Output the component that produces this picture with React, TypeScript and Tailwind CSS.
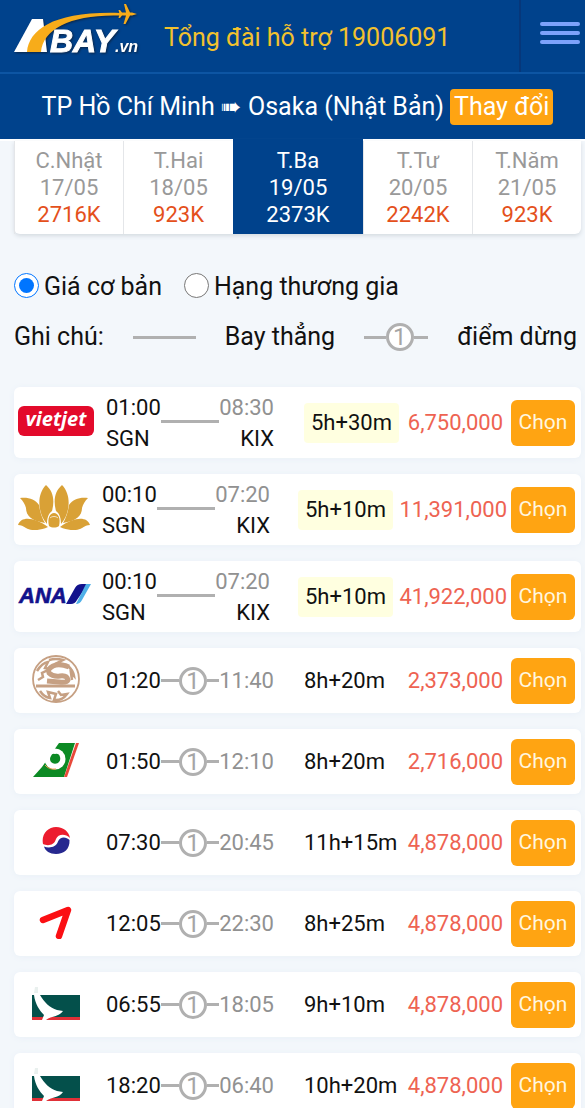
import { useState, ReactNode } from 'react'
import { clsx } from 'clsx'

interface DayFare {
  day: string
  date: string
  price: string
}

interface Flight {
  id: number
  airline: string
  logo: ReactNode
  depart: string
  arrive: string
  duration: string
  price: string
  direct?: boolean
}

function AbayLogo() {
  return (
    <svg
      width="126"
      height="62"
      viewBox="0 0 126 62"
      role="img"
      aria-label="Abay.vn"
      className="drop-shadow-[1px_1px_1px_#0a2547]"
    >
      <path d="M1 48 19 15h11l4 33z" fill="#fff" />
      <path d="M14 48C16 25 42 7 107 9v2.500C60 10 30 24 28 48z" fill="#f7ac1a" />
      <path
        d="m124 10-5-1.500h-2L113 0h-2l2 8.500h-4L107 6h-1.500l1 4-1 4h1.500l2-2.500h4L110.500 20h2L117 11.500h2z"
        fill="#f7ac1a"
      />
      <g fontFamily="Liberation Sans, Arial, sans-serif" fontWeight="bold" fontStyle="italic" fill="#fff">
        <text x="37" y="48" fontSize="32" stroke="#fff" strokeWidth="1">BAY</text>
        <text x="102" y="48" fontSize="16">.vn</text>
      </g>
    </svg>
  )
}

function VietjetLogo() {
  return (
    <svg width="76" height="30" viewBox="0 0 76 30">
      <rect width="76" height="30" rx="6" fill="#e30a2b" />
      <text
        x="38"
        y="20"
        textAnchor="middle"
        fontFamily="Open Sans, sans-serif"
        fontSize="20"
        fontWeight="700"
        fontStyle="italic"
        fill="#fff"
      >
        vietjet
      </text>
    </svg>
  )
}

function LotusLogo() {
  return (
    <svg width="72" height="45" viewBox="0 0 72 45" fill="#d9a136">
      <path d="M28 0c7 6 9 15 6 26-4 3-5 8-5 13C20 29 18 10 28 0z" />
      <path d="M44 0c-7 6-9 15-6 26 4 3 5 8 5 13C52 29 54 10 44 0z" />
      <path d="M2 13c8-1 15 1 19 7 1 7 3 13 6 18C14 36 8 31 8 23 7 19 5 16 2 13z" />
      <path d="M70 13c-8-1-15 1-19 7-1 7-3 13-6 18 13-2 19-7 19-15 1-4 3-7 6-10z" />
      <path d="M0 40C3 31 16 32 30 42c-9 4-17 4-22 1-3-2-5-3-8-3z" />
      <path d="M72 40c-3-9-16-8-30 2 9 4 17 4 22 1 3-2 5-3 8-3z" />
      <path d="M31 41c-2-8 1-13 5-13s7 5 5 13c-3 2-7 2-10 0z" />
      <path d="M32 33c2-2 6-2 8 0" stroke="#fff" strokeWidth=".7" fill="none" />
    </svg>
  )
}

function AnaLogo() {
  return (
    <svg width="74" height="30" viewBox="0 0 74 30">
      <text
        x="2"
        y="23"
        fontFamily="Liberation Sans, Arial, sans-serif"
        fontSize="22"
        fontWeight="bold"
        fontStyle="italic"
        fill="#12128c"
        stroke="#12128c"
        strokeWidth=".6"
      >
        ANA
      </text>
      <path d="M49 24 58 8q2-4 7-4h6L60 20q-2 4-6 4z" fill="#12128c" />
      <path d="M69 4h5l-9 16q-2 4-6 4z" fill="#4fb0e8" />
    </svg>
  )
}

function DragonLogo() {
  return (
    <svg width="48" height="48" viewBox="0 0 48 48" fill="none" stroke="#c6a083">
      <circle cx="24" cy="24" r="23" strokeWidth="1.800" />
      <path d="M5 16q5-8 11-9l-3 6 5 1-8 4 1 4-5 3" strokeWidth="2.500" />
      <path d="M17 5q7-2 14 0l-6 3 10 2q6 5 7 11l-3-3 1 7" strokeWidth="2.500" />
      <path d="M37 12q-10-4-16-1t-4 7q4 4 11 3t8 4q-1 3-9 2l-12-1" strokeWidth="5" />
      <path d="M4 31h39" strokeWidth="3" />
      <path d="M8 36q4 6 10 7l-2-6 8 2-2 6q8 1 13-6l-6 1-3-4" strokeWidth="2.500" />
    </svg>
  )
}

function EvaLogo() {
  return (
    <svg width="46" height="34" viewBox="0 0 46 34">
      <path d="M0 34 9 24 26 0h16L31 34z" fill="#0c8a24" />
      <path d="M43 0h3L34 34h-3z" fill="#e8493a" />
      <ellipse cx="22" cy="16" rx="10.500" ry="10.500" fill="#fff" />
      <path d="M10 20 20 5q-3 5-1 6z" fill="#fff" />
      <path d="M18 13q1-3 4-2 4-1 5 3 1 4-2 6-4 2-7-1-2-3 0-6z" fill="#0c8a24" />
      <path d="M12 22q4 5 11 4" stroke="#f2994a" strokeWidth="1" fill="none" />
    </svg>
  )
}

function KoreanAirLogo() {
  return (
    <svg width="28" height="28" viewBox="0 0 28 28">
      <circle cx="14" cy="14" r="13.500" fill="#fff" />
      <path d="M1 17C-1 7 6 0 14 0c8 0 13 5 14 11-5-5-12-4-14 1-2 7-9 7-13 5z" fill="#ec1c2e" />
      <path d="M27.500 13C28 22 22 27 14 27 8 27 3 24 2 19.500c5 2 12 1 14-5 2-5 8-5 11.500-1.500z" fill="#26288f" />
    </svg>
  )
}

function AsianaLogo() {
  return (
    <svg width="34" height="34" viewBox="0 0 34 34">
      <path d="M4 15 29 5 20 31" fill="none" stroke="#fb0f13" strokeWidth="6.500" strokeLinecap="round" strokeLinejoin="round" />
    </svg>
  )
}

function CathayLogo() {
  return (
    <svg width="48" height="34" viewBox="0 0 48 34">
      <path d="M0 9h48v22H0z" fill="#04504b" />
      <path d="M0 31h48v3H0z" fill="#e03037" />
      <path d="M2 0h5l1 9c4 7 10 13 17 15l6 1c-4 6-12 5-17 9h-4l2-5C8 25 3 18 2 9z" fill="#fff" />
      <path d="M3 1h3v6H2z" fill="#e9f0ee" />
    </svg>
  )
}

const days: DayFare[] = [
  { day: 'C.Nhật', date: '17/05', price: '2716K' },
  { day: 'T.Hai', date: '18/05', price: '923K' },
  { day: 'T.Ba', date: '19/05', price: '2373K' },
  { day: 'T.Tư', date: '20/05', price: '2242K' },
  { day: 'T.Năm', date: '21/05', price: '923K' },
]

const flights: Flight[] = [
  { id: 1, airline: 'Vietjet', logo: <VietjetLogo />, depart: '01:00', arrive: '08:30', duration: '5h+30m', price: '6,750,000', direct: true },
  { id: 2, airline: 'Vietnam Airlines', logo: <LotusLogo />, depart: '00:10', arrive: '07:20', duration: '5h+10m', price: '11,391,000', direct: true },
  { id: 3, airline: 'ANA', logo: <AnaLogo />, depart: '00:10', arrive: '07:20', duration: '5h+10m', price: '41,922,000', direct: true },
  { id: 4, airline: 'Dragonair', logo: <DragonLogo />, depart: '01:20', arrive: '11:40', duration: '8h+20m', price: '2,373,000' },
  { id: 5, airline: 'EVA Air', logo: <EvaLogo />, depart: '01:50', arrive: '12:10', duration: '8h+20m', price: '2,716,000' },
  { id: 6, airline: 'Korean Air', logo: <KoreanAirLogo />, depart: '07:30', arrive: '20:45', duration: '11h+15m', price: '4,878,000' },
  { id: 7, airline: 'Asiana Airlines', logo: <AsianaLogo />, depart: '12:05', arrive: '22:30', duration: '8h+25m', price: '4,878,000' },
  { id: 8, airline: 'Cathay Pacific', logo: <CathayLogo />, depart: '06:55', arrive: '18:05', duration: '9h+10m', price: '4,878,000' },
  { id: 9, airline: 'Cathay Pacific', logo: <CathayLogo />, depart: '18:20', arrive: '06:40', duration: '10h+20m', price: '4,878,000' },
]

function StopLine({ className }: { className?: string }) {
  return (
    <span className={clsx('flex items-center', className)}>
      <span className="h-[3px] flex-[3] bg-[#b0b0b0]" />
      <span className="flex size-7 shrink-0 items-center justify-center rounded-full border-[3px] border-[#b0b0b0] bg-white text-2xl leading-none text-[#a5a5a5]">
        1
      </span>
      <span className="h-[3px] flex-[2] bg-[#b0b0b0]" />
    </span>
  )
}

function FlightRow({ flight }: { flight: Flight }) {
  // Eight-digit fares need a wider price column
  const wide = flight.price.length > 9

  return (
    <li
      className={clsx(
        'flex items-center rounded-md bg-white pr-1.5 shadow-[0_1px_6px_#e9f0f7]',
        flight.direct ? 'h-[71px]' : 'h-[65px]'
      )}
    >
      <div className="flex flex-1 justify-center pb-1" role="img" aria-label={flight.airline}>
        {flight.logo}
      </div>

      {flight.direct ? (
        <div className="ml-2 flex w-[168px] leading-[31px]">
          <div>
            <div>{flight.depart}</div>
            <div>SGN</div>
          </div>
          <span className="mt-7 h-[3px] flex-1 bg-[#b0b0b0]" />
          <div className="text-right">
            <div className="text-[#919191]">{flight.arrive}</div>
            <div>KIX</div>
          </div>
        </div>
      ) : (
        <div className="ml-2 flex w-[168px] items-center">
          <span>{flight.depart}</span>
          <StopLine className="flex-1" />
          <span className="text-[#919191]">{flight.arrive}</span>
        </div>
      )}

      <div className={wide ? 'ml-7 w-[100px]' : 'ml-[30px] w-[103px]'}>
        <span className={clsx('inline-block leading-10', flight.direct && 'rounded-sm bg-[#ffffe0] px-[7px]')}>
          {flight.duration}
        </span>
      </div>

      <div className={clsx('text-right text-[#ee6352]', wide ? 'mr-1 w-[109px]' : 'mr-2 w-24')}>
        {flight.price}
      </div>

      <button type="button" className="h-[46px] w-16 rounded-md bg-[#ffa412] text-[21px] text-[#fff6df]">
        Chọn
      </button>
    </li>
  )
}

export default function App() {
  const [selected, setSelected] = useState(2)
  const [fareClass, setFareClass] = useState('basic')

  const fareOptions = [
    { value: 'basic', label: 'Giá cơ bản' },
    { value: 'business', label: 'Hạng thương gia' },
  ]

  return (
    <div className="min-h-screen overflow-hidden bg-[#f3f7fb] font-['Roboto',sans-serif] text-[22px] text-[#111]">
      <header className="flex h-[74px] border-b-2 border-[#0d55a3] bg-[#00428c]">
        <a href="#home" className="ml-[13px] pt-1">
          <AbayLogo />
        </a>
        <a href="tel:19006091" className="ml-[25px] flex-1 self-center pt-1 text-[25px] whitespace-nowrap text-[#f2c12e]">
          Tổng đài hỗ trợ 19006091
        </a>
        <button
          type="button"
          aria-label="Menu"
          className="flex w-[66px] flex-col items-end gap-[5px] border-l-2 border-[#06377a] pt-[22px] pr-[5px]"
        >
          <span className="h-1 w-10 rounded-full bg-[#7da2fb]" />
          <span className="h-1 w-10 rounded-full bg-[#7da2fb]" />
          <span className="h-1 w-10 rounded-full bg-[#7da2fb]" />
        </button>
      </header>

      <div className="flex h-[65px] items-center justify-center gap-1.5 bg-[#00428c] pr-1 pl-[14px] text-[25px] whitespace-nowrap text-white">
        <h1>
          TP Hồ Chí Minh <span className="font-['DejaVu_Sans',sans-serif]">➠</span> Osaka (Nhật Bản)
        </h1>
        <button type="button" className="h-9 rounded-sm bg-[#ffa412] px-1 leading-9">
          Thay đổi
        </button>
      </div>

      <nav className="border-t-2 border-white pr-1 pl-[14px]">
        <div className="grid grid-cols-[109fr_110fr_130fr_109fr_109fr] rounded-b-md bg-white shadow-[0_2px_4px_#d5dbe1]">
          {days.map((d, i) => (
            <button
              key={d.date}
              type="button"
              onClick={() => setSelected(i)}
              className={clsx(
                'pb-1.5 text-center leading-[27px]',
                i === selected ? '-mt-0.5 bg-[#00428c] pt-2 text-white' : 'border-l border-[#e4e6e9] pt-1.5 text-[#999]'
              )}
            >
              <span className="block">{d.day}</span>
              <span className="block">{d.date}</span>
              <span className={clsx('block', i !== selected && 'text-[#e4501b]')}>{d.price}</span>
            </button>
          ))}
        </div>
      </nav>

      <main className="pr-1 pl-[14px]">
        <div className="mt-[37px] flex gap-[22px] text-[25px] leading-8">
          {fareOptions.map((option) => (
            <label key={option.value} className="flex items-center gap-[5px]">
              <input
                type="radio"
                name="fareClass"
                value={option.value}
                checked={fareClass === option.value}
                onChange={() => setFareClass(option.value)}
                className="mb-1 size-[25px] accent-[#0075ff]"
              />
              {option.label}
            </label>
          ))}
        </div>

        <div className="mt-[18px] flex items-center justify-between pr-1 text-[25px] leading-8">
          <span>Ghi chú:</span>
          <span className="h-[3px] w-[63px] bg-[#b0b0b0]" />
          <span>Bay thẳng</span>
          <StopLine className="w-16" />
          <span>điểm dừng</span>
        </div>

        <ul className="mt-[34px] flex flex-col gap-4">
          {flights.map((flight) => (
            <FlightRow key={flight.id} flight={flight} />
          ))}
        </ul>
      </main>
    </div>
  )
}
